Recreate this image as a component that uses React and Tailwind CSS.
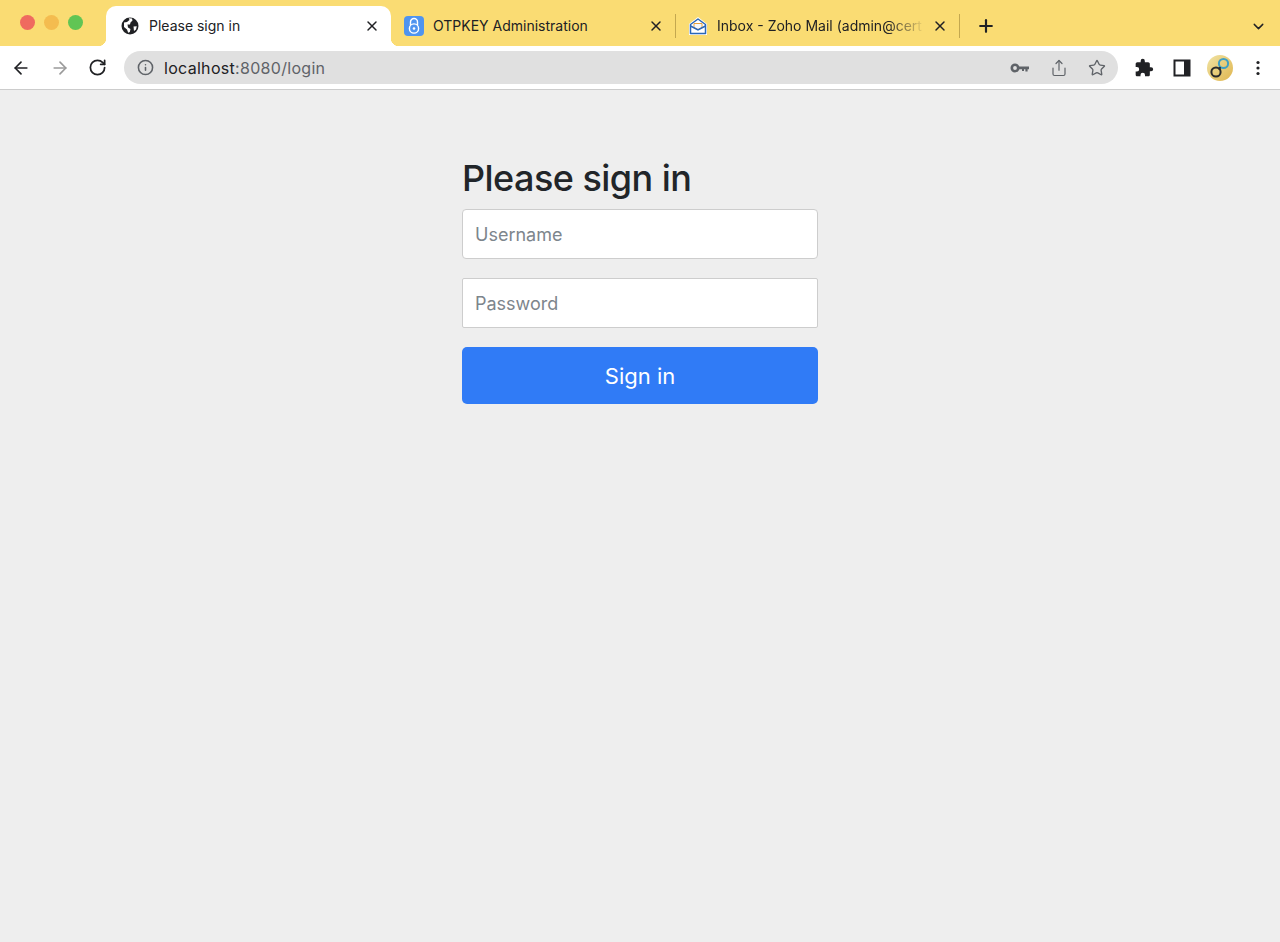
import { X, Plus, ChevronDown, ArrowLeft, ArrowRight, RotateCw, Info, Star, Share } from 'lucide-react'

const GlobeIcon = () => (
  <svg width="18" height="18" viewBox="0 0 18 18" className="shrink-0">
    <circle cx="9" cy="9" r="8.5" fill="#202124" />
    <path d="M3 5.5 L6 5 L8.5 3 L7.8 1.2 L11 1.5 L11.5 3.5 L9.5 5.5 L9 7.5 L6.5 7.5 L7 10.5 L9.5 12 L8.8 15 L7.2 15.8 L6 12.5 L3 10 Z" fill="#fff" />
    <path d="M12.5 9.5 L15.8 9.2 L15 12.5 L13 14 Z" fill="#fff" />
  </svg>
)

const LockIcon = () => (
  <svg width="20" height="20" viewBox="0 0 20 20" className="shrink-0">
    <rect width="20" height="20" rx="4" fill="#4f94ef" />
    <path d="M6.5 9 V6 a3.5 3.5 0 0 1 7 0 V9" fill="none" stroke="#fff" strokeWidth="1.4" />
    <circle cx="10" cy="12.5" r="4.6" fill="none" stroke="#fff" strokeWidth="1.4" />
    <circle cx="10" cy="12.5" r="1.3" fill="#fff" />
  </svg>
)

const MailIcon = () => (
  <svg width="18" height="18" viewBox="0 0 18 18" className="shrink-0">
    <path d="M0 7 L9 0 L18 7 V18 H0 Z" fill="#fff" />
    <path d="M1.5 7.5 L9 2 L16.5 7.5 V16.5 H1.5 Z" fill="none" stroke="#2a66b8" strokeWidth="1.5" strokeLinejoin="round" />
    <path d="M5 6.5 H13 V10.5 L9 12.5 L5 10.5 Z" fill="#f4f8fd" stroke="#e9a23b" strokeWidth="1" />
    <path d="M1.5 9 L9 13 L16.5 9" fill="none" stroke="#2a66b8" strokeWidth="1.5" />
  </svg>
)

const KeyIcon = () => (
  <svg width="20" height="20" viewBox="0 0 20 20" className="shrink-0">
    <circle cx="5" cy="10" r="3.2" fill="none" stroke="#5f6368" strokeWidth="2.6" />
    <path d="M8 8.5 H19 V11.3 H17.6 V13.5 H15.4 V11.3 H14 V13 H12 V11.3 H8 Z" fill="#5f6368" />
  </svg>
)

const PuzzleIcon = () => (
  <svg width="20" height="20" viewBox="0 0 24 24" className="shrink-0">
    <path d="M20.5 11H19V7c0-1.1-.9-2-2-2h-4V3.5a2.5 2.5 0 0 0-5 0V5H4c-1.1 0-2 .9-2 2v3.8h1.5a2.7 2.7 0 0 1 0 5.4H2V20c0 1.1.9 2 2 2h3.8v-1.5a2.7 2.7 0 0 1 5.4 0V22H17c1.1 0 2-.9 2-2v-4h1.5a2.5 2.5 0 0 0 0-5z" fill="#202124" />
  </svg>
)

const SidePanelIcon = () => (
  <svg width="18" height="18" viewBox="0 0 18 18" className="shrink-0">
    <rect x="0.5" y="0.5" width="17" height="17" fill="#202124" />
    <rect x="2.5" y="2.5" width="8.5" height="13" fill="#fff" />
  </svg>
)

const Avatar = () => (
  <svg width="26" height="26" viewBox="0 0 26 26" className="shrink-0">
    <defs>
      <linearGradient id="avatarFill" x1="0" y1="0" x2="1" y2="1">
        <stop offset="0" stopColor="#f0e3a4" />
        <stop offset="1" stopColor="#e0b64f" />
      </linearGradient>
    </defs>
    <circle cx="13" cy="13" r="13" fill="url(#avatarFill)" />
    <circle cx="16.5" cy="8.5" r="4.6" fill="none" stroke="#3f9fc4" strokeWidth="2" />
    <circle cx="9" cy="17" r="4.6" fill="none" stroke="#2b2b2b" strokeWidth="2" />
    <path d="M13 12 L12.5 15" stroke="#2b2b2b" strokeWidth="2" />
  </svg>
)

const DotsIcon = () => (
  <svg width="4" height="16" viewBox="0 0 4 16" className="shrink-0">
    <circle cx="2" cy="2.5" r="1.6" fill="#202124" />
    <circle cx="2" cy="8" r="1.6" fill="#202124" />
    <circle cx="2" cy="13.5" r="1.6" fill="#202124" />
  </svg>
)

export default function App() {
  return (
    <div className="min-h-[942px] bg-[#eeeeee] font-['Inter',sans-serif]">
      {/* Tab strip */}
      <div className="flex h-[46px] bg-[#fadc73] pt-[6px] pl-[20px] pr-[13px]">
        <div className="flex w-[86px] shrink-0 gap-[9px] pt-[9px]">
          <span className="h-[15px] w-[15px] rounded-full bg-[#ef6a5f]" />
          <span className="h-[15px] w-[15px] rounded-full bg-[#f4bc4f]" />
          <span className="h-[15px] w-[15px] rounded-full bg-[#61c554]" />
        </div>

        <div className="relative flex h-[40px] w-[285px] shrink-0 items-center rounded-t-[10px] bg-white pl-[15px] pr-[11px]">
          <span className="absolute -left-[8px] bottom-0 h-[8px] w-[8px] bg-[radial-gradient(circle_at_0_0,#fadc73_8px,#ffffff_8.5px)]" />
          <span className="absolute -right-[8px] bottom-0 h-[8px] w-[8px] bg-[radial-gradient(circle_at_100%_0,#fadc73_8px,#ffffff_8.5px)]" />
          <GlobeIcon />
          <span className="ml-[10px] -mt-px flex-1 text-[14px] text-[#202124]">Please sign in</span>
          <X size={16} strokeWidth={2.2} color="#202124" />
        </div>

        <div className="flex h-[40px] w-[284px] shrink-0 items-center pl-[13px] pr-[11px]">
          <LockIcon />
          <span className="ml-[9px] -mt-px flex-1 text-[14px] text-[#202124]">OTPKEY Administration</span>
          <X size={16} strokeWidth={2.2} color="#202124" />
        </div>

        <div className="h-[24px] w-px shrink-0 self-center bg-[#c4a84f]" />

        <div className="flex h-[40px] w-[283px] shrink-0 items-center pl-[13px] pr-[11px]">
          <MailIcon />
          <span className="ml-[10px] -mt-px whitespace-nowrap text-[14px] text-[#202124] [mask-image:linear-gradient(to_right,#000_170px,transparent_208px)]">Inbox - Zoho Mail (admin@cert</span>
          <span className="flex-1" />
          <X size={16} strokeWidth={2.2} color="#202124" />
        </div>

        <div className="h-[24px] w-px shrink-0 self-center bg-[#c4a84f]" />

        <div className="flex h-[40px] items-center pl-[16px]">
          <Plus size={20} strokeWidth={2.6} color="#202124" />
        </div>
        <div className="flex h-[40px] flex-1 items-center justify-end">
          <ChevronDown size={17} strokeWidth={2} color="#202124" />
        </div>
      </div>

      {/* Toolbar */}
      <div className="flex h-[44px] items-center border-b border-[#cccccc] bg-white pl-[11px] pr-[20px]">
        <ArrowLeft size={20} strokeWidth={2} color="#202124" />
        <ArrowRight size={20} strokeWidth={2} color="#9a9a9a" className="ml-[19px]" />
        <RotateCw size={19} strokeWidth={2.2} color="#202124" className="ml-[18px]" />
        <div className="ml-[17px] flex h-[33px] w-[994px] shrink-0 items-center rounded-full bg-[#e0e0e0] pl-[13px] pr-[12px]">
          <Info size={17} strokeWidth={2.2} color="#5f6368" />
          <span className="ml-[10px] flex-1 text-[16px] tracking-[0.3px] text-[#202124]">
            localhost<span className="text-[#5f6368]">:8080/login</span>
          </span>
          <KeyIcon />
          <Share size={18} strokeWidth={1.6} color="#5f6368" className="ml-[20px]" />
          <Star size={18} strokeWidth={1.8} color="#5f6368" className="ml-[20px]" />
        </div>
        <div className="ml-[16px]"><PuzzleIcon /></div>
        <div className="ml-[19px]"><SidePanelIcon /></div>
        <div className="ml-[16px]"><Avatar /></div>
        <div className="ml-[23px]"><DotsIcon /></div>
      </div>

      {/* Login form */}
      <form className="mx-auto w-[356px] pt-[67px]">
        <h2 className="mb-[9px] text-[36px] leading-[43px] font-medium tracking-[-0.55px] text-[#212529]">Please sign in</h2>
        <input
          type="text"
          placeholder="Username"
          className="block h-[50px] w-full rounded-[4px] border border-[#cdcdcd] bg-white px-[12px] text-[18px] placeholder:text-[#7d858c]"
        />
        <input
          type="password"
          placeholder="Password"
          className="mt-[19px] block h-[50px] w-full rounded-[2px] border border-[#cdcdcd] bg-white px-[12px] text-[18px] placeholder:text-[#7d858c]"
        />
        <button
          type="button"
          className="mt-[19px] block h-[57px] w-full rounded-[5px] bg-[#307bf6] pt-[2px] text-[22px] text-white"
        >
          Sign in
        </button>
      </form>
    </div>
  )
}
